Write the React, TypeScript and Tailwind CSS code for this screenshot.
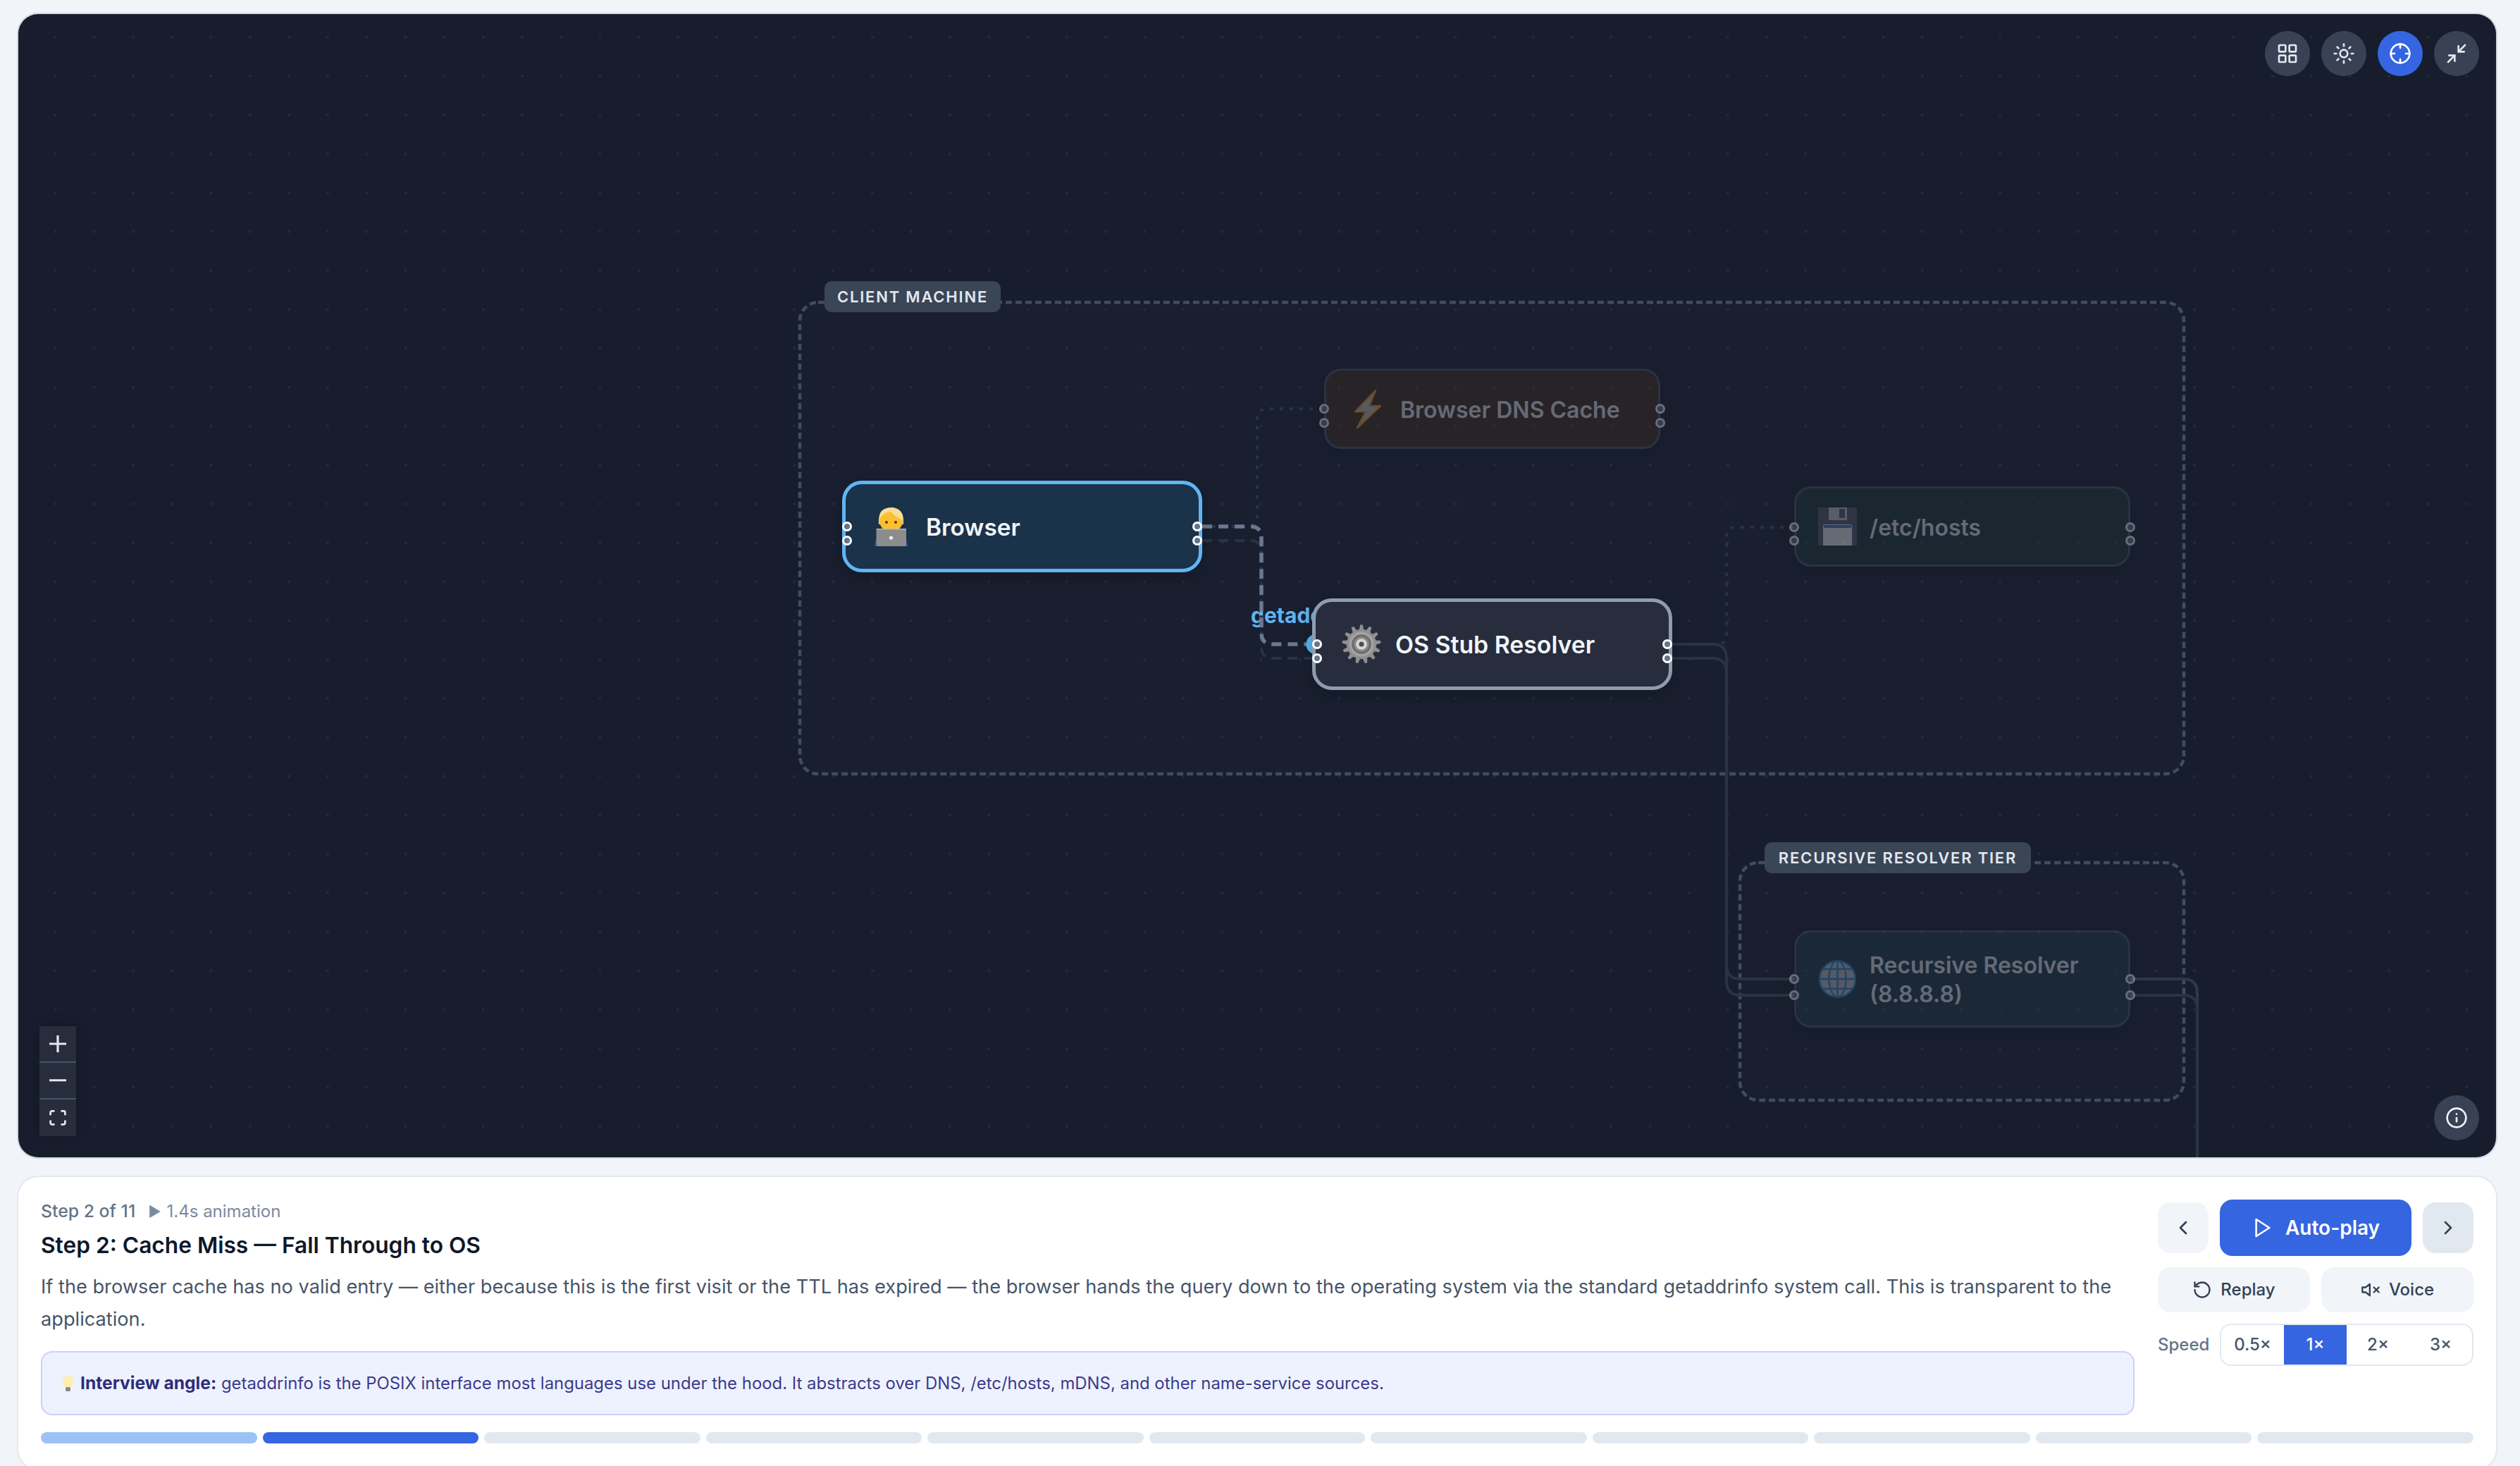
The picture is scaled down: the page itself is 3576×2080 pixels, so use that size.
import { ChevronLeft, ChevronRight, Crosshair, Info, LayoutGrid, Minimize2, RotateCcw, Sun } from 'lucide-react';

const gearPath = (() => {
  const cx = 28.5;
  const cy = 28;
  const teeth = 13;
  let d = '';
  for (let i = 0; i < teeth; i++) {
    const step = (Math.PI * 2) / teeth;
    const a = i * step - Math.PI / 2;
    const pts = [
      [21.5, a - step * 0.3],
      [28, a - step * 0.14],
      [28, a + step * 0.14],
      [21.5, a + step * 0.3],
    ];
    pts.forEach(([r, t], j) => {
      const x = (cx + r * Math.cos(t)).toFixed(1);
      const y = (cy + r * Math.sin(t)).toFixed(1);
      d += `${i === 0 && j === 0 ? 'M' : 'L'}${x} ${y} `;
    });
  }
  return d + 'Z';
})();

const PersonIcon = () => (
  <svg width="49" height="55" viewBox="0 0 49 55">
    <path d="M0 55 L3 45 H46 L49 55 Z" fill="#2f3fb0" />
    <path d="M7 24 Q5 1 25 0 Q44 1 42 24 Z" fill="#eec460" />
    <ellipse cx="24.5" cy="20" rx="16" ry="15" fill="#fbc02d" />
    <path d="M8 17 Q12 7 24 6 Q30 13 41 18 Q43 2 25 0 Q6 1 8 17 Z" fill="#f7dc9a" />
    <circle cx="18" cy="21" r="1.9" fill="#4a3320" />
    <circle cx="31" cy="21" r="1.9" fill="#4a3320" />
    <rect x="3.5" y="30" width="42.5" height="25" rx="1" fill="#8c8c8c" />
    <rect x="3.5" y="30" width="42.5" height="1.5" fill="#b5b5b5" />
    <circle cx="24.5" cy="43" r="2.6" fill="#eeeeee" />
  </svg>
);

const GearIcon = () => (
  <svg width="57" height="56" viewBox="0 0 57 56">
    <path d={gearPath} fill="#8f8f8f" />
    <circle cx="28.5" cy="28" r="18" fill="#a2a2a2" />
    <circle cx="28.5" cy="28" r="14" fill="#6a6a6a" />
    <circle cx="28.5" cy="28" r="11" fill="#8a8a8a" />
    <circle cx="28.5" cy="28" r="8" fill="#d6d6d6" />
    <circle cx="28.5" cy="28" r="3.6" fill="#4b4b4b" />
  </svg>
);

const BoltIcon = () => (
  <svg width="38" height="55" viewBox="0 0 38 55">
    <polygon points="30,1 1,31 16,31 4,54 37,23 21,23" fill="#c8c8c0" stroke="#f5a623" strokeWidth="2.5" strokeLinejoin="round" />
  </svg>
);

const FloppyIcon = () => (
  <svg width="55" height="54" viewBox="0 0 55 54">
    <path d="M0 0 H52 L55 3 V54 H0 Z" fill="#5a6070" />
    <rect x="15" y="0" width="26" height="18" fill="#d0d0d4" />
    <rect x="30" y="2" width="8" height="13" fill="#5a6070" />
    <path d="M7 26 Q7 24 9 24 H46 Q48 24 48 26 V54 H7 Z" fill="#f5f5f5" />
    <rect x="8" y="25" width="39" height="4" fill="#3f7fd0" />
  </svg>
);

const GlobeIcon = () => (
  <svg width="53" height="54" viewBox="0 0 53 54" fill="none" stroke="#2f8ccc" strokeWidth="2.4">
    <circle cx="26.5" cy="27" r="25.5" fill="#c9c9c9" />
    <ellipse cx="26.5" cy="27" rx="12" ry="25.5" />
    <path d="M26.5 1.5 V52.5 M1 27 H52 M5 13 H48 M5 41 H48" />
  </svg>
);

const Handle = ({ className }: { className: string }) => (
  <span className={`absolute h-[14px] w-[14px] rounded-full border-[3px] ${className}`} />
);

const CanvasButton = ({ children, className = 'bg-[#384254]' }: { children: React.ReactNode; className?: string }) => (
  <button className={`flex h-[64px] w-[64px] items-center justify-center rounded-full text-[#e2e8f0] ${className}`}>
    {children}
  </button>
);

const speeds = ['0.5×', '1×', '2×', '3×'];
const steps = Array.from({ length: 11 }, (_, i) => i);

export default function App() {
  return (
    <div className="flex h-[2080px] flex-col gap-[28px] overflow-hidden bg-[#f1f5f9] px-[26px] pt-[20px] font-['Inter',sans-serif]">
      <div className="relative h-[1622px] w-[3516px] shrink-0 overflow-hidden rounded-[28px] bg-[#171d2d] bg-[radial-gradient(circle,#262d3d_1.4px,transparent_2px)] bg-[size:55.2px_55.2px] bg-[position:25.2px_5.2px] shadow-[0_0_0_2px_#d3d9e3]">
        <span className="absolute left-[1749px] top-[833px] whitespace-nowrap text-[30px] leading-[40px] font-bold text-[#5db4f0]">
          getaddrinfo()
        </span>

        <svg className="absolute inset-0" width="3516" height="1622" viewBox="26 20 3516 1622" fill="none">
          <rect x="1135" y="429" width="1964" height="669" rx="26" fill="#ffffff" fillOpacity="0.01" stroke="#434c5d" strokeWidth="4.5" strokeDasharray="9 5" />
          <rect x="2469" y="1224" width="630" height="337" rx="26" fill="#ffffff" fillOpacity="0.01" stroke="#434c5d" strokeWidth="4.5" strokeDasharray="9 5" />

          <g stroke="#2b3343" strokeWidth="4" strokeDasharray="5 9">
            <path d="M1706 747 H1770 Q1784 747 1784 733 V594 Q1784 580 1798 580 H1880" />
            <path d="M2373 914 H2436 Q2450 914 2450 900 V762 Q2450 748 2464 748 H2546" />
          </g>
          <g stroke="#2b3342" strokeWidth="4">
            <path d="M2373 914 H2430 Q2450 914 2450 934 V1369 Q2450 1389 2470 1389 H2546" />
            <path d="M2373 934 H2430 Q2450 934 2450 954 V1392 Q2450 1412 2470 1412 H2546" />
            <path d="M3023 1389 H3098 Q3118 1389 3118 1409 V1642" stroke="#303848" />
            <path d="M3023 1412 H3098 Q3118 1412 3118 1432 V1642" />
          </g>
          <path d="M1706 767 H1774 Q1790 767 1790 783 V918 Q1790 934 1806 934 H1863" stroke="#2b3343" strokeWidth="4" strokeDasharray="14 9" />
          <path d="M1706 747 H1774 Q1790 747 1790 763 V898 Q1790 914 1806 914 H1863" stroke="#6b7891" strokeWidth="5.5" strokeDasharray="14 9" />
          <circle cx="1868" cy="914" r="14.5" fill="#5ab4f0" />
        </svg>

        <div className="absolute left-[1144px] top-[379px] flex h-[44px] w-[250px] items-center justify-center rounded-[10px] bg-[#3a4556] text-[22px] font-semibold tracking-[1.8px] whitespace-nowrap text-[#e2e8f0]">
          CLIENT MACHINE
        </div>
        <div className="absolute left-[2478px] top-[1175px] flex h-[44px] w-[378px] items-center justify-center rounded-[10px] bg-[#3a4556] text-[22px] font-semibold tracking-[1.8px] whitespace-nowrap text-[#e2e8f0]">
          RECURSIVE RESOLVER TIER
        </div>

        {/* Browser */}
        <div className="absolute left-[1169px] top-[662px] flex h-[130px] w-[511px] items-center gap-[22px] rounded-[28px] border-[5px] border-[#5fb6f2] bg-[#1a324a] pl-[36px] text-[33.4px] font-semibold text-[#f1f5f9] shadow-[0_8px_24px_rgba(0,0,0,0.2)]">
          <span className="flex w-[56px] justify-center"><PersonIcon /></span>
          <span className="mt-[3px]">Browser</span>
          <Handle className="left-[-5px] top-[53px] border-white bg-[#64748b]" />
          <Handle className="left-[-5px] top-[73px] border-white bg-[#64748b]" />
          <Handle className="right-[-5px] top-[53px] border-white bg-[#64748b]" />
          <Handle className="right-[-5px] top-[73px] border-white bg-[#64748b]" />
        </div>

        {/* OS Stub Resolver */}
        <div className="absolute left-[1836px] top-[829px] flex h-[130px] w-[511px] items-center gap-[20px] rounded-[28px] border-[5px] border-[#8e9bb0] bg-[#272d3d] pl-[37px] text-[33.8px] font-semibold text-[#f1f5f9] shadow-[0_8px_24px_rgba(0,0,0,0.2)]">
          <span className="flex w-[56px] justify-center"><GearIcon /></span>
          <span className="mt-[3px]">OS Stub Resolver</span>
          <Handle className="left-[-5px] top-[53px] border-white bg-[#64748b]" />
          <Handle className="left-[-5px] top-[73px] border-white bg-[#64748b]" />
          <Handle className="right-[-5px] top-[53px] border-white bg-[#64748b]" />
          <Handle className="right-[-5px] top-[73px] border-white bg-[#64748b]" />
        </div>

        {/* Browser DNS Cache */}
        <div className="absolute left-[1853px] top-[503px] flex h-[114px] w-[477px] items-center gap-[18px] rounded-[24px] border-[3px] border-[#4a566a] bg-[#452b1a] pl-[31px] text-[32px] font-semibold text-[#f1f5f9] opacity-35 shadow-[0_8px_24px_rgba(0,0,0,0.2)]">
          <span className="flex w-[56px] justify-center"><BoltIcon /></span>
          <span className="mt-[3px]">Browser DNS Cache</span>
          <Handle className="left-[-10px] top-[47px] border-white bg-[#64748b]" />
          <Handle className="left-[-10px] top-[67px] border-white bg-[#64748b]" />
          <Handle className="right-[-10px] top-[47px] border-white bg-[#64748b]" />
          <Handle className="right-[-10px] top-[67px] border-white bg-[#64748b]" />
        </div>

        {/* /etc/hosts */}
        <div className="absolute left-[2520px] top-[670px] flex h-[114px] w-[477px] items-center gap-[18px] rounded-[24px] border-[3px] border-[#4a566a] bg-[#1d3333] pl-[30px] text-[32px] font-semibold text-[#f1f5f9] opacity-35 shadow-[0_8px_24px_rgba(0,0,0,0.2)]">
          <span className="flex w-[56px] justify-center"><FloppyIcon /></span>
          <span className="mt-[3px]">/etc/hosts</span>
          <Handle className="left-[-10px] top-[48px] border-white bg-[#64748b]" />
          <Handle className="left-[-10px] top-[67px] border-white bg-[#64748b]" />
          <Handle className="right-[-10px] top-[48px] border-white bg-[#64748b]" />
          <Handle className="right-[-10px] top-[67px] border-white bg-[#64748b]" />
        </div>

        {/* Recursive Resolver */}
        <div className="absolute left-[2520px] top-[1300px] flex h-[138px] w-[477px] items-center gap-[18px] rounded-[24px] border-[3px] border-[#4a566a] bg-[#1d3947] pl-[30px] text-[32px] leading-[41px] font-semibold text-[#f1f5f9] opacity-35 shadow-[0_8px_24px_rgba(0,0,0,0.2)]">
          <span className="flex w-[56px] justify-center"><GlobeIcon /></span>
          <span className="mt-[2px]">Recursive Resolver<br />(8.8.8.8)</span>
          <Handle className="left-[-10px] top-[59px] border-white bg-[#64748b]" />
          <Handle className="left-[-10px] top-[82px] border-white bg-[#64748b]" />
          <Handle className="right-[-10px] top-[59px] border-white bg-[#64748b]" />
          <Handle className="right-[-10px] top-[82px] border-white bg-[#64748b]" />
        </div>

        <div className="absolute right-[24px] top-[24px] flex gap-[16px]">
          <CanvasButton><LayoutGrid size={32} /></CanvasButton>
          <CanvasButton><Sun size={32} /></CanvasButton>
          <CanvasButton className="bg-[#3565e0] !text-white"><Crosshair size={32} /></CanvasButton>
          <CanvasButton><Minimize2 size={32} /></CanvasButton>
        </div>

        <div className="absolute right-[24px] bottom-[24px]">
          <CanvasButton><Info size={32} className="text-[#f1f5f9]" /></CanvasButton>
        </div>

        <div className="absolute bottom-[30px] left-[30px] flex w-[52px] flex-col bg-[#272d3c] text-[#e2e8f0] shadow-[0_0_20px_rgba(0,0,0,0.2)]">
          <button className="flex h-[52px] items-center justify-center border-b-2 border-[#4a5563]">
            <svg width="24" height="24" viewBox="0 0 32 32" fill="currentColor"><path d="M32 18.133H18.133V32h-4.266V18.133H0v-4.266h13.867V0h4.266v13.867H32z" /></svg>
          </button>
          <button className="flex h-[52px] items-center justify-center border-b-2 border-[#4a5563]">
            <svg width="24" height="4" viewBox="0 0 32 5" fill="currentColor"><path d="M0 0h32v4.2H0z" /></svg>
          </button>
          <button className="flex h-[52px] items-center justify-center">
            <svg width="24" height="22" viewBox="0 0 32 30" fill="currentColor"><path d="M3.692 4.63c0-.53.4-.938.939-.938h5.215V0H4.708C2.13 0 0 2.054 0 4.63v5.216h3.692V4.63zM27.354 0h-5.2v3.692h5.17c.53 0 .984.4.984.939v5.215H32V4.631A4.624 4.624 0 0027.354 0zm.954 24.83c0 .532-.4.94-.939.94h-5.215v3.768h5.215c2.577 0 4.631-2.13 4.631-4.707v-5.139h-3.692v5.139zm-23.677.94c-.531 0-.939-.4-.939-.94v-5.138H0v5.139c0 2.577 2.13 4.707 4.708 4.707h5.138V25.77H4.631z" /></svg>
          </button>
        </div>
      </div>

      <div className="h-[414px] w-[3516px] shrink-0 rounded-[28px] bg-white px-[32px] pt-[32px] shadow-[0_0_0_2px_#e2e8f0]">
        <div className="flex gap-[33px]">
          <div className="min-w-0 flex-1">
            <div className="flex h-[34px] items-center gap-[18px] text-[#64748b]">
              <span className="text-[24.8px] font-medium">Step 2 of 11</span>
              <span className="flex items-center gap-[8px] text-[24px] text-[#7c8aa0]">
                <span className="text-[20px]">▶</span>1.4s animation
              </span>
            </div>
            <h2 className="mt-[9px] text-[31.7px] leading-[44px] font-semibold text-[#0f172a]">
              Step 2: Cache Miss — Fall Through to OS
            </h2>
            <p className="mt-[14px] text-[27.2px] leading-[46px] text-[#475569]">
              If the browser cache has no valid entry — either because this is the first visit or the TTL has expired — the browser hands the query down to the operating system via the standard getaddrinfo system call. This is transparent to the application.
            </p>
            <div className="mt-[22px] flex h-[91px] items-center rounded-[16px] border-2 border-[#c7d2fe] bg-[#eef2ff] pl-[28px] text-[23.9px] whitespace-nowrap text-[#3b3a8c]">
              <svg className="mr-[9px] shrink-0" width="17" height="22" viewBox="0 0 17 22">
                <path d="M8.5 0 C13 0 16.5 3.5 16.5 8 C16.5 11 14.5 12.5 13 16 H4 C2.5 12.5 0.5 11 0.5 8 C0.5 3.5 4 0 8.5 0 Z" fill="#fdeeb0" />
                <rect x="5" y="16" width="7" height="6" rx="1.5" fill="#8a8a8a" />
              </svg>
              <span><strong className="text-[24.6px] font-bold text-[#2f2c7a]">Interview angle:</strong> getaddrinfo is the POSIX interface most languages use under the hood. It abstracts over DNS, /etc/hosts, mDNS, and other name-service sources.</span>
            </div>
          </div>

          <div className="flex w-[448px] shrink-0 flex-col gap-[16px]">
            <div className="flex h-[80px] items-center gap-[16px]">
              <button className="flex h-[72px] w-[72px] items-center justify-center rounded-[18px] bg-[#f1f5f9] text-[#334155]"><ChevronLeft size={32} /></button>
              <button className="flex h-[80px] flex-1 items-center justify-center gap-[16px] rounded-[18px] bg-[#3565e0] text-[28px] font-semibold text-white">
                <svg width="32" height="32" viewBox="0 0 24 24" fill="none" stroke="currentColor" strokeWidth="2" strokeLinecap="round" strokeLinejoin="round"><polygon points="5 3 19 12 5 21 5 3" /></svg>
                Auto-play
              </button>
              <button className="flex h-[72px] w-[72px] items-center justify-center rounded-[18px] bg-[#e2e8f0] text-[#334155]"><ChevronRight size={32} /></button>
            </div>
            <div className="flex h-[64px] gap-[16px] text-[24px] font-medium text-[#334155]">
              <button className="flex flex-1 items-center justify-center gap-[12px] rounded-[18px] bg-[#f1f5f9]"><RotateCcw size={28} />Replay</button>
              <button className="flex flex-1 items-center justify-center gap-[12px] rounded-[18px] bg-[#f1f5f9]">
                <svg width="28" height="28" viewBox="0 0 24 24" fill="none" stroke="currentColor" strokeWidth="2" strokeLinecap="round" strokeLinejoin="round"><polygon points="11 5 6 9 2 9 2 15 6 15 11 19 11 5" /><line x1="22" y1="9" x2="16" y2="15" /><line x1="16" y1="9" x2="22" y2="15" /></svg>
                Voice
              </button>
            </div>
            <div className="flex items-center gap-[14px]">
              <span className="w-[74px] text-[24px] font-medium text-[#64748b]">Speed</span>
              <div className="flex h-[60px] flex-1 overflow-hidden rounded-[16px] border-2 border-[#e2e8f0]">
                {speeds.map((s) => (
                  <button
                    key={s}
                    className={`flex flex-1 items-center justify-center text-[24px] font-medium ${s === '1×' ? 'bg-[#3565e0] text-white' : 'text-[#475569]'}`}
                  >
                    {s}
                  </button>
                ))}
              </div>
            </div>
          </div>
        </div>

        <div className="mt-[24px] flex gap-[8px]">
          {steps.map((i) => (
            <div
              key={i}
              className={`h-[16px] flex-1 rounded-[8px] ${i === 0 ? 'bg-[#9bc2f7]' : i === 1 ? 'bg-[#3565e0]' : 'bg-[#e2e8f0]'}`}
            />
          ))}
        </div>
      </div>
    </div>
  );
}
